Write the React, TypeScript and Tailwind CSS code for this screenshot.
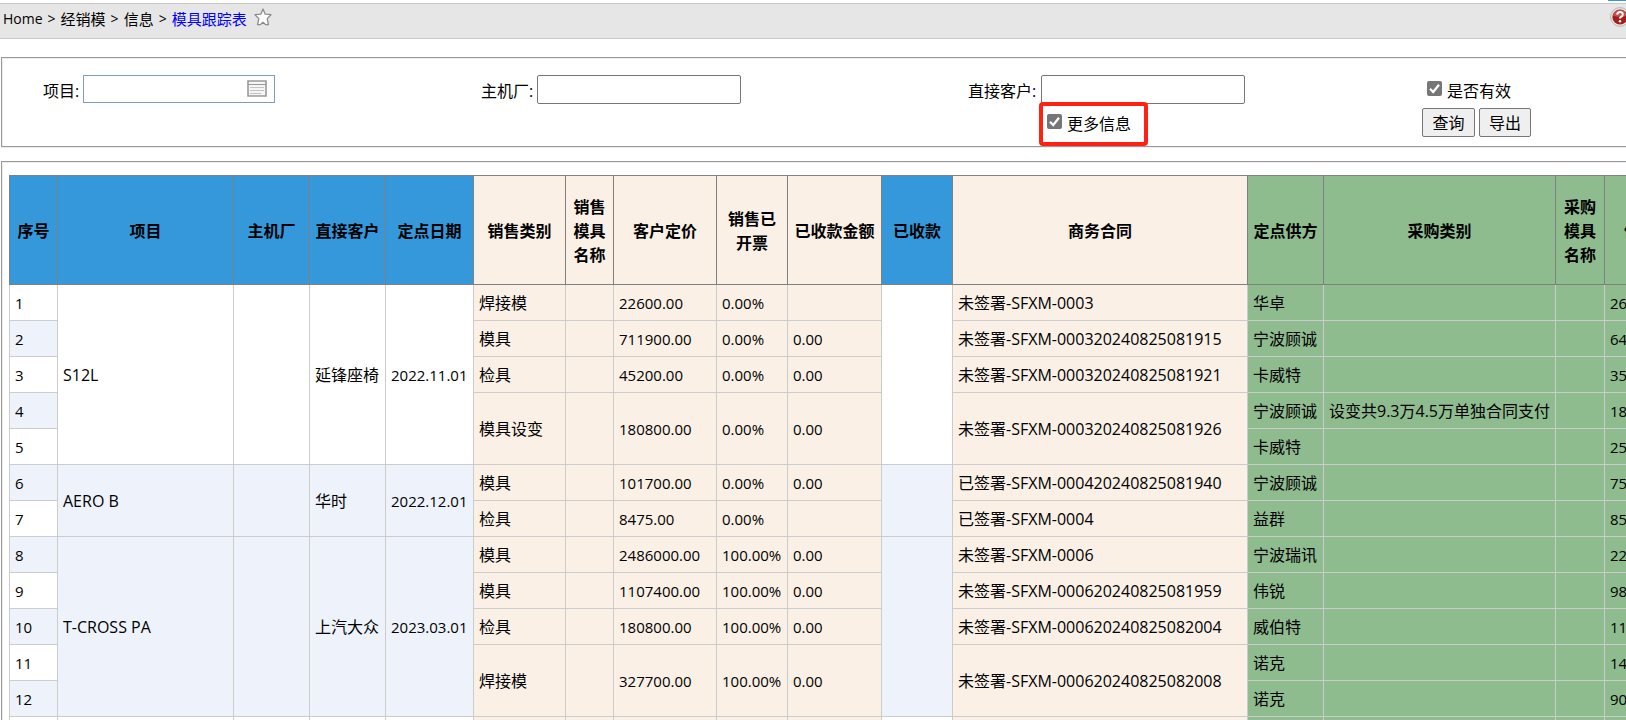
import type { ReactNode } from 'react';

interface Purchase {
  supplier: string;
  category?: string;
  price: string;
}

interface Sale {
  category: string;
  price: string;
  invoiced: string;
  received: string;
  contract: string;
  purchases: Purchase[];
}

interface Project {
  name: string;
  customer: string;
  date: string;
  sales: Sale[];
}

const PROJECTS: Project[] = [
  {
    name: 'S12L',
    customer: '延锋座椅',
    date: '2022.11.01',
    sales: [
      { category: '焊接模', price: '22600.00', invoiced: '0.00%', received: '', contract: '未签署-SFXM-0003', purchases: [{ supplier: '华卓', price: '26' }] },
      { category: '模具', price: '711900.00', invoiced: '0.00%', received: '0.00', contract: '未签署-SFXM-000320240825081915', purchases: [{ supplier: '宁波顾诚', price: '64' }] },
      { category: '检具', price: '45200.00', invoiced: '0.00%', received: '0.00', contract: '未签署-SFXM-000320240825081921', purchases: [{ supplier: '卡威特', price: '35' }] },
      {
        category: '模具设变', price: '180800.00', invoiced: '0.00%', received: '0.00', contract: '未签署-SFXM-000320240825081926',
        purchases: [
          { supplier: '宁波顾诚', category: '设变共9.3万4.5万单独合同支付', price: '18' },
          { supplier: '卡威特', price: '25' },
        ],
      },
    ],
  },
  {
    name: 'AERO B',
    customer: '华时',
    date: '2022.12.01',
    sales: [
      { category: '模具', price: '101700.00', invoiced: '0.00%', received: '0.00', contract: '已签署-SFXM-000420240825081940', purchases: [{ supplier: '宁波顾诚', price: '75' }] },
      { category: '检具', price: '8475.00', invoiced: '0.00%', received: '', contract: '已签署-SFXM-0004', purchases: [{ supplier: '益群', price: '85' }] },
    ],
  },
  {
    name: 'T-CROSS PA',
    customer: '上汽大众',
    date: '2023.03.01',
    sales: [
      { category: '模具', price: '2486000.00', invoiced: '100.00%', received: '0.00', contract: '未签署-SFXM-0006', purchases: [{ supplier: '宁波瑞讯', price: '22' }] },
      { category: '模具', price: '1107400.00', invoiced: '100.00%', received: '0.00', contract: '未签署-SFXM-000620240825081959', purchases: [{ supplier: '伟锐', price: '98' }] },
      { category: '检具', price: '180800.00', invoiced: '100.00%', received: '0.00', contract: '未签署-SFXM-000620240825082004', purchases: [{ supplier: '威伯特', price: '11' }] },
      {
        category: '焊接模', price: '327700.00', invoiced: '100.00%', received: '0.00', contract: '未签署-SFXM-000620240825082008',
        purchases: [
          { supplier: '诺克', price: '14' },
          { supplier: '诺克', price: '90' },
        ],
      },
    ],
  },
];

const HEAD_TONE = {
  base: 'bg-[#3498db]',
  sale: 'bg-[#faf0e6]',
  buy: 'bg-[#8fbc8f]',
};

const COLUMNS: { title: string; tone: keyof typeof HEAD_TONE; width: string }[] = [
  { title: '序号', tone: 'base', width: 'w-[48px]' },
  { title: '项目', tone: 'base', width: 'w-[176px]' },
  { title: '主机厂', tone: 'base', width: 'w-[76px]' },
  { title: '直接客户', tone: 'base', width: 'w-[76px]' },
  { title: '定点日期', tone: 'base', width: 'w-[88px]' },
  { title: '销售类别', tone: 'sale', width: 'w-[92px]' },
  { title: '销售模具名称', tone: 'sale', width: 'w-[48px]' },
  { title: '客户定价', tone: 'sale', width: 'w-[103px]' },
  { title: '销售已开票', tone: 'sale', width: 'w-[71px]' },
  { title: '已收款金额', tone: 'sale', width: 'w-[94px]' },
  { title: '已收款', tone: 'base', width: 'w-[71px]' },
  { title: '商务合同', tone: 'sale', width: 'w-[295px]' },
  { title: '定点供方', tone: 'buy', width: 'w-[76px]' },
  { title: '采购类别', tone: 'buy', width: 'w-[232px]' },
  { title: '采购模具名称', tone: 'buy', width: 'w-[49px]' },
  { title: '供方定价', tone: 'buy', width: 'w-[103px]' },
];

const STRIPE = 'bg-[#eef3fb]';
const SALE = 'bg-[#faf0e6]';
const BUY = 'bg-[#8fbc8f]';

function Cell({ tone, span, children }: { tone: string; span?: number; children?: ReactNode }) {
  return (
    <td rowSpan={span} className={`h-9 border border-[#ccc] px-[5px] whitespace-nowrap ${tone}`}>
      {children}
    </td>
  );
}

// Figures run wider than the Chinese text, so they are set one size down
function Num({ children }: { children: ReactNode }) {
  return <span className="text-[15px]">{children}</span>;
}

function Rows() {
  const rows: ReactNode[] = [];
  let no = 0;
  for (const project of PROJECTS) {
    const total = project.sales.reduce((sum, s) => sum + s.purchases.length, 0);
    const start = no;
    for (const sale of project.sales) {
      sale.purchases.forEach((purchase, i) => {
        const first = no === start;
        no += 1;
        const groupTone = (start + 1) % 2 === 0 ? STRIPE : 'bg-white';
        const span = sale.purchases.length;
        rows.push(
          <tr key={no}>
            <Cell tone={no % 2 === 0 ? STRIPE : 'bg-white'}><Num>{no}</Num></Cell>
            {first && (
              <>
                <Cell tone={groupTone} span={total}>{project.name}</Cell>
                <Cell tone={groupTone} span={total} />
                <Cell tone={groupTone} span={total}>{project.customer}</Cell>
                <Cell tone={groupTone} span={total}><Num>{project.date}</Num></Cell>
              </>
            )}
            {i === 0 && (
              <>
                <Cell tone={SALE} span={span}>{sale.category}</Cell>
                <Cell tone={SALE} span={span} />
                <Cell tone={SALE} span={span}><Num>{sale.price}</Num></Cell>
                <Cell tone={SALE} span={span}><Num>{sale.invoiced}</Num></Cell>
                <Cell tone={SALE} span={span}><Num>{sale.received}</Num></Cell>
              </>
            )}
            {first && <Cell tone={groupTone} span={total} />}
            {i === 0 && <Cell tone={SALE} span={span}>{sale.contract}</Cell>}
            <Cell tone={BUY}>{purchase.supplier}</Cell>
            <Cell tone={BUY}>{purchase.category}</Cell>
            <Cell tone={BUY} />
            <Cell tone={BUY}><Num>{purchase.price}</Num></Cell>
          </tr>,
        );
      });
    }
  }
  // start of the next project
  rows.push(
    <tr key="next">
      <Cell tone="bg-white" />
      <Cell tone="bg-white" />
      <Cell tone="bg-white" />
      <Cell tone="bg-white" />
      <Cell tone="bg-white" />
      <Cell tone={SALE} />
      <Cell tone={SALE} />
      <Cell tone={SALE} />
      <Cell tone={SALE} />
      <Cell tone={SALE} />
      <Cell tone="bg-white" />
      <Cell tone={SALE} />
      <Cell tone={BUY} />
      <Cell tone={BUY} />
      <Cell tone={BUY} />
      <Cell tone={BUY} />
    </tr>,
  );
  return <tbody>{rows}</tbody>;
}

function CheckBox({ id }: { id: string }) {
  return (
    <span className="mt-1 grid shrink-0">
      <input id={id} type="checkbox" defaultChecked className="col-start-1 row-start-1 size-[15px] appearance-none rounded-xs bg-[#767676]" />
      <svg viewBox="0 0 15 15" className="pointer-events-none col-start-1 row-start-1 size-[15px]" fill="none" stroke="#fff" strokeWidth="2.2">
        <path d="M3 7.8 6.2 11 12 3.8" />
      </svg>
    </span>
  );
}

function Breadcrumb() {
  return (
    <nav className="mt-[3px] flex h-9 items-start justify-between border-y border-[#c8c8c8] bg-[#e6e6e6] pl-[3px]">
      <div className="flex items-center gap-[5px] pt-[3px] text-[15px] leading-6">
        <a href="#home" className="text-[14px]">Home</a>
        <span className="text-[14px]">&gt;</span>
        <a href="#dealer">经销模</a>
        <span className="text-[14px]">&gt;</span>
        <a href="#info">信息</a>
        <span className="text-[14px]">&gt;</span>
        <a href="#tracking" className="text-[#0000ff]">模具跟踪表</a>
        <button type="button" aria-label="收藏" className="-mt-1 ml-0.5">
          <svg viewBox="0 0 18 18" className="size-[18px]" fill="#fff" stroke="#8c8c8c" strokeWidth="1.3" strokeLinejoin="round">
            <path d="M9 1 11.2 6.2 17 6.7 13.2 10.6 14.4 16.7 11.8 16.7 9 14.2 6.2 16.7 3.6 16.7 4.8 10.6 1 6.7 6.8 6.2Z" />
          </svg>
        </button>
      </div>
      <button type="button" aria-label="帮助" className="-mr-1 mt-[3px] shrink-0">
        <svg viewBox="0 0 20 20" className="size-5">
          <circle cx="10" cy="10" r="9.4" fill="#e4e4e4" stroke="#aaa" strokeWidth="0.8" />
          <circle cx="10" cy="10" r="7.6" fill="#a51d1d" />
          <path d="M3 8.5a7.2 7.2 0 0 1 14 0Q10 11 3 8.5Z" fill="#c95050" />
          <path d="M7.2 7.6Q7.4 5 10 5t2.8 2.4Q12.8 9 11 9.9 10 10.5 10 11.6" fill="none" stroke="#fff" strokeWidth="2" />
          <circle cx="10" cy="14.2" r="1.2" fill="#fff" />
        </svg>
      </button>
    </nav>
  );
}

function Filters() {
  return (
    <form className="mt-[18px] ml-px grid h-[90px] grid-cols-[438px_487px_454px_1fr] border border-r-0 border-[#999] pt-[17px] shadow-[inset_1px_1px_0_#eee,0_1px_0_#eee]">
      <div className="flex items-start pl-[41px]">
        <label htmlFor="project" className="w-10 pt-1 leading-6 whitespace-nowrap">项目:</label>
        <div className="flex h-7 w-48 items-start border border-[#7f9db9]">
          <input id="project" type="text" className="h-full min-w-0 flex-1 px-1 outline-none" />
          <button type="button" aria-label="选择项目" className="mt-1 mr-[7px]">
            <svg viewBox="0 0 20 17" className="h-[17px] w-5" fill="none">
              <path d="M1 1h18v15H1z" fill="#f5f5f5" stroke="#999" strokeWidth="1.6" />
              <path d="M1 4.5h18" stroke="#999" />
              <path d="M3 7.5h14M3 10.5h14M3 13.5h11" stroke="#c4c4c4" />
            </svg>
          </button>
        </div>
      </div>
      <div className="flex items-start pl-[41px]">
        <label htmlFor="oem" className="w-14 pt-1 leading-6 whitespace-nowrap">主机厂:</label>
        <input id="oem" type="text" className="h-[29px] w-[204px] rounded-xs border border-[#767676] px-1" />
      </div>
      <div className="flex flex-col">
        <div className="flex items-start pl-[41px]">
          <label htmlFor="customer" className="w-[73px] pt-1 leading-6 whitespace-nowrap">直接客户:</label>
          <input id="customer" type="text" className="h-[29px] w-[204px] rounded-xs border border-[#767676] px-1" />
        </div>
        <div className="-mt-0.5 ml-28 flex h-11 w-[109px] items-start gap-[5px] rounded-sm border-4 border-[#ff2213] pt-1 pl-1">
          <CheckBox id="more" />
          <label htmlFor="more" className="pt-0.5 leading-6 whitespace-nowrap">更多信息</label>
        </div>
      </div>
      <div className="flex flex-col pl-[41px]">
        <div className="flex h-[33px] items-start gap-[5px] pt-0.5 pl-[5px]">
          <CheckBox id="valid" />
          <label htmlFor="valid" className="pt-0.5 leading-6 whitespace-nowrap">是否有效</label>
        </div>
        <div className="flex gap-1">
          <button type="button" className="h-[29px] w-[53px] rounded-xs border border-[#767676] bg-[#efefef] leading-6">查询</button>
          <button type="button" className="h-[29px] w-[52px] rounded-xs border border-[#767676] bg-[#efefef] leading-6">导出</button>
        </div>
      </div>
    </form>
  );
}

export default function App() {
  return (
    <div className="relative h-screen overflow-hidden bg-white font-['Open_Sans','Noto_Sans_CJK_SC',sans-serif] text-base text-black">
      <div className="absolute top-0 right-0 h-px w-[18px] bg-[#3498db]" />
      <Breadcrumb />
      <Filters />
      <section className="mt-[14px] ml-px border border-r-0 border-[#999] pt-[13px] pl-[7px] shadow-[inset_1px_1px_0_#eee]">
        <table className="w-max table-fixed border-collapse">
          <colgroup>
            {COLUMNS.map((c) => (
              <col key={c.title} className={c.width} />
            ))}
          </colgroup>
          <thead>
            <tr className="h-[109px]">
              {COLUMNS.map((c) => (
                <th key={c.title} scope="col" className={`border border-[#808080] px-1 pt-0.5 leading-6 font-bold ${HEAD_TONE[c.tone]}`}>
                  {c.title}
                </th>
              ))}
            </tr>
          </thead>
          <Rows />
        </table>
      </section>
    </div>
  );
}
